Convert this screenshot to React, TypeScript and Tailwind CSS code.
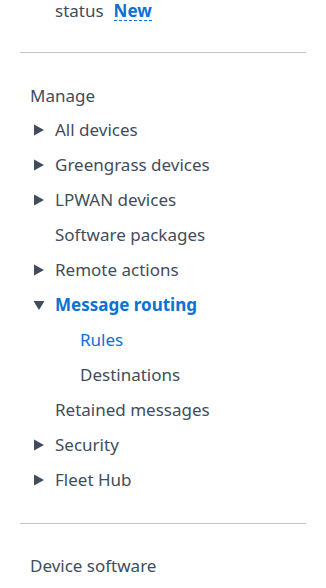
import type { ReactNode } from "react";

const font = { fontFamily: '"Noto Sans", "Open Sans", Arial, sans-serif' };

function Caret({ open }: { open?: boolean }) {
  return (
    <svg width="12" height="12" viewBox="0 0 12 12" className="shrink-0 text-[#414d5c]">
      {open ? (
        <path d="M0.5 2 L11.5 2 L6 11 Z" fill="currentColor" />
      ) : (
        <path d="M1 0.5 L11 6 L1 11.5 Z" fill="currentColor" />
      )}
    </svg>
  );
}

function Item({
  children,
  caret,
  open,
  indent = 0,
  active,
  bold,
}: {
  children: ReactNode;
  caret?: boolean;
  open?: boolean;
  indent?: number;
  active?: boolean;
  bold?: boolean;
}) {
  const pad = indent === 2 ? "pl-[80px]" : "pl-[55px]";
  return (
    <li className={`relative h-[35px] flex items-center ${pad}`}>
      {caret && (
        <span className="absolute left-[33px] top-1/2 -translate-y-1/2 flex">
          <Caret open={open} />
        </span>
      )}
      <span
        className={`${active ? "text-[#0972d3]" : "text-[#414d5c]"} ${
          bold ? "font-bold" : ""
        }`}
      >
        {children}
      </span>
    </li>
  );
}

export default function App() {
  return (
    <div style={font} className="w-[326px] h-[588px] bg-white overflow-hidden text-[17px] leading-[20px]">
      <div className="pl-[55px] pt-px h-[21px] flex items-center gap-[10px] text-[#414d5c]">
        <span>status</span>
        <span className="font-bold text-[#0972d3] border-b border-dashed border-[#0972d3] leading-[18px]">
          New
        </span>
      </div>

      <div className="mx-[20px] mt-[31px] h-px bg-[#c6c6cd]" />

      <div className="pl-[30px] mt-[33px] h-[20px] flex items-center text-[#414d5c]">Manage</div>

      <ul className="mt-[6px]">
        <Item caret>All devices</Item>
        <Item caret>Greengrass devices</Item>
        <Item caret>LPWAN devices</Item>
        <Item>Software packages</Item>
        <Item caret>Remote actions</Item>
        <Item caret open active bold>
          Message routing
        </Item>
        <Item indent={2} active>
          Rules
        </Item>
        <Item indent={2}>Destinations</Item>
        <Item>Retained messages</Item>
        <Item caret>Security</Item>
        <Item caret>Fleet Hub</Item>
      </ul>

      <div className="mx-[20px] mt-[26px] h-px bg-[#c6c6cd]" />

      <div className="pl-[30px] mt-[32px] h-[20px] flex items-center text-[#414d5c]">Device software</div>
    </div>
  );
}
